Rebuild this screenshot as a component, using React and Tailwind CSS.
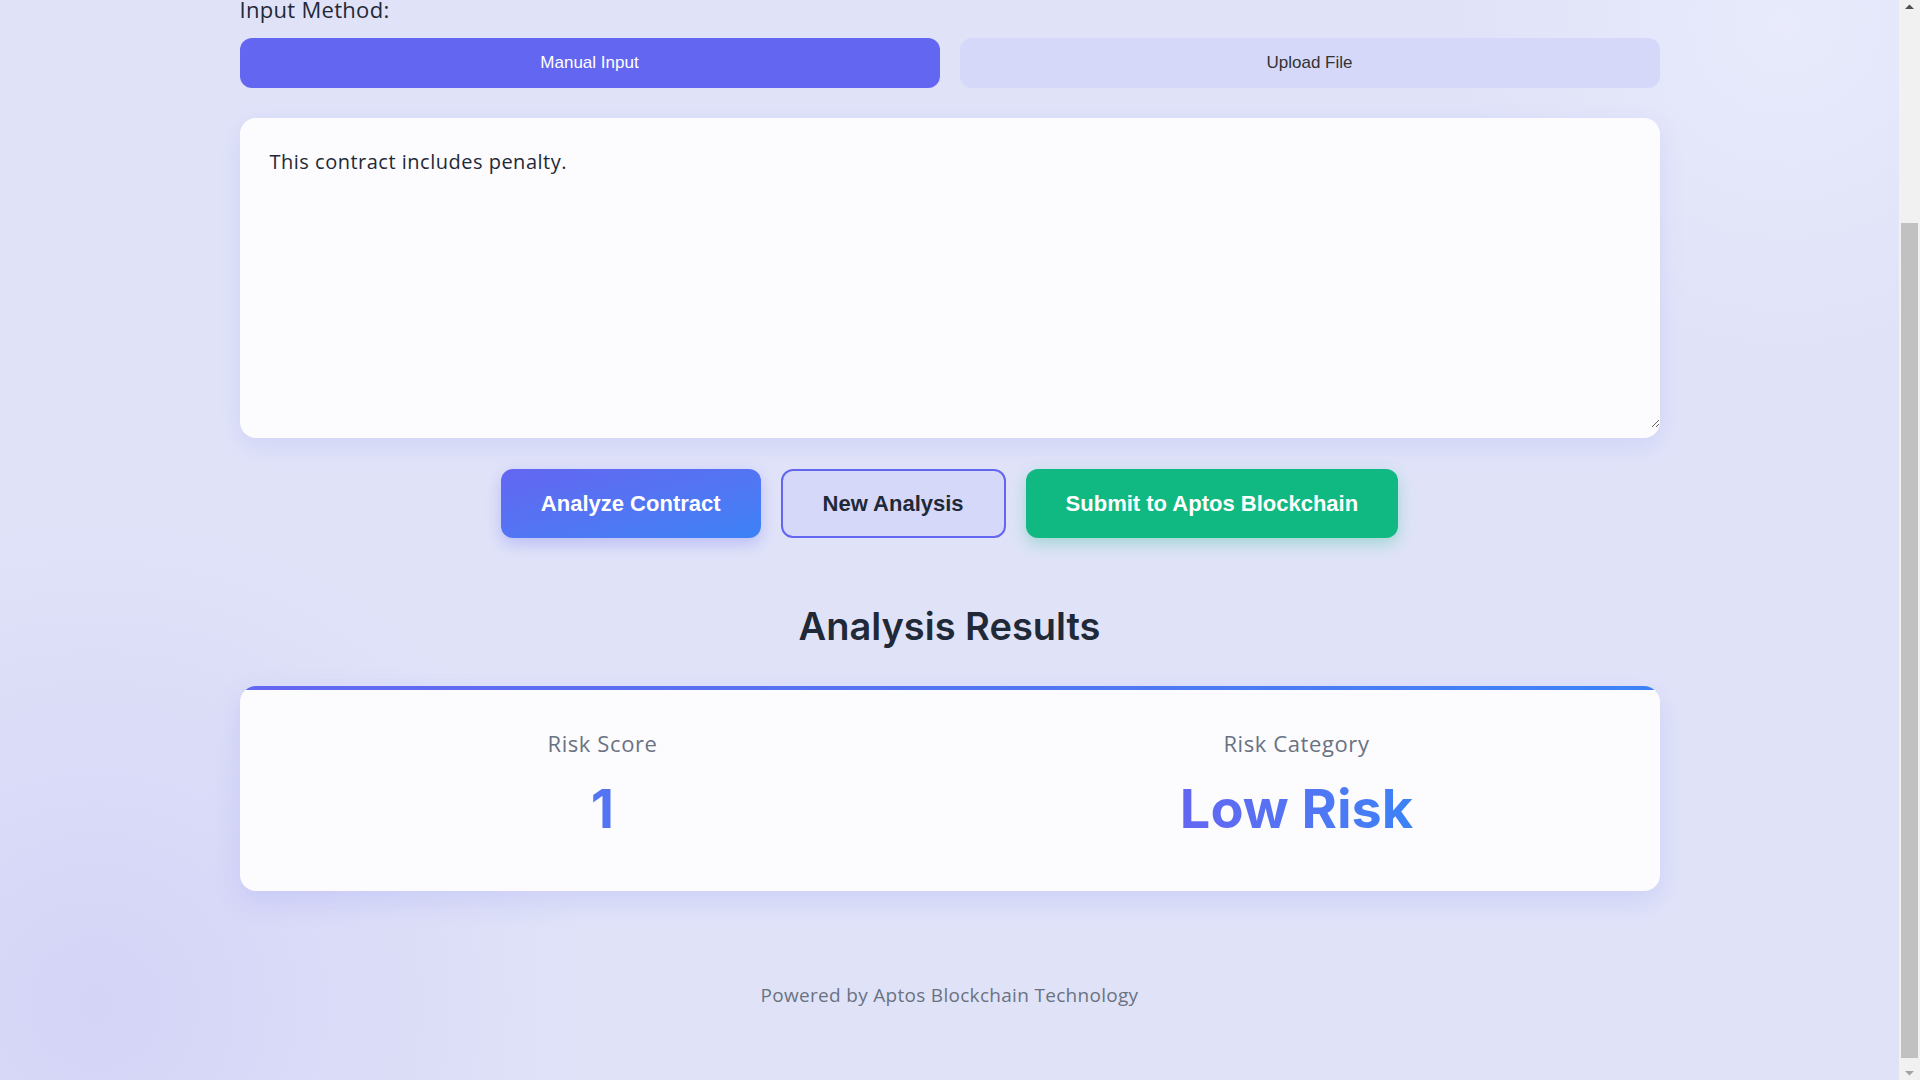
import { useState, useLayoutEffect, useEffect } from "react";

function FakeScrollbar() {
  // the reference was captured with a classic browser scrollbar, scrolled to the bottom
  return (
    <div aria-hidden="true" className="fixed top-0 right-0 z-50 h-screen w-[21px] bg-[#f1f1f1]">
      <svg className="absolute top-[3px] left-[5px]" width="11" height="8" viewBox="0 0 11 8">
        <path d="M1 6 L5.5 1.5 L10 6 Z" fill="#505050" />
      </svg>
      <div className="absolute top-[223px] left-[2px] h-[835px] w-[17px] bg-[#c1c1c1]" />
      <svg className="absolute bottom-[3px] left-[5px]" width="11" height="8" viewBox="0 0 11 8">
        <path d="M1 2 L5.5 6.5 L10 2 Z" fill="#a3a3a3" />
      </svg>
    </div>
  );
}

export default function App() {
  const [mode, setMode] = useState("manual");
  const [text, setText] = useState("This contract includes penalty.");

  useLayoutEffect(() => {
    window.scrollTo(0, document.documentElement.scrollHeight);
  }, []);
  useEffect(() => {
    window.scrollTo(0, document.documentElement.scrollHeight);
  }, []);

  const tab = "h-[50px] rounded-xl font-['Liberation_Sans',Arial,sans-serif] text-[17px]";

  return (
    <div className="min-h-screen bg-[#e0e3f8] bg-fixed bg-[radial-gradient(circle_at_5%_93%,rgba(170,160,245,0.22),transparent_24%),radial-gradient(circle_at_93%_2%,rgba(240,242,255,0.5),transparent_16%)] pr-[21px] font-['Open_Sans','Noto_Sans',sans-serif] text-[#1f2937]">
      <FakeScrollbar />
      <div className="mx-auto w-[1420px] pt-10">
        {/* header (above the fold) */}
        <header className="mb-[95px] text-center">
          <h1 className="font-['Inter',sans-serif] text-5xl font-bold leading-[58px] text-[#4f46e5]">
            Contract Risk Analyzer
          </h1>
          <p className="mt-3 text-xl leading-[30px] text-gray-500">
            AI-powered legal contract analysis secured on the Aptos blockchain
          </p>
          <div className="mt-6 inline-flex items-center gap-2 rounded-full bg-white/70 px-5 py-2 text-sm text-gray-600">
            <span className="h-2 w-2 rounded-full bg-emerald-500" />
            Wallet connected
          </div>
        </header>

        <section>
          <label className="mb-[13px] block text-[22px] font-medium leading-[32px] tracking-[0.3px] text-[#1f2937]">
            Input Method:
          </label>
          <div className="grid grid-cols-2 gap-5">
            <button
              onClick={() => setMode("manual")}
              className={mode === "manual" ? `${tab} bg-[#6366f1] text-white` : `${tab} bg-[#d5d8f9] text-[#333]`}
            >
              Manual Input
            </button>
            <button
              onClick={() => setMode("upload")}
              className={mode === "upload" ? `${tab} bg-[#6366f1] text-white` : `${tab} bg-[#d5d8f9] text-[#333]`}
            >
              Upload File
            </button>
          </div>

          <div className="mt-[30px] rounded-2xl bg-[#fcfcff] pb-[10px] shadow-[0_8px_24px_rgba(99,102,241,0.12)]">
            <textarea
              value={text}
              onChange={e => setText(e.target.value)}
              className="block h-[310px] w-full resize-y rounded-t-2xl bg-transparent p-[30px] text-[20px] leading-[28px] tracking-[0.5px] text-[#1f2937] outline-none"
            />
          </div>

          <div className="mt-[31px] flex justify-center gap-5 font-['Liberation_Sans',Arial,sans-serif] text-[22px] font-bold leading-[25px]">
            <button className="rounded-xl bg-gradient-to-br from-[#6366f1] to-[#3b82f6] px-10 py-[22px] text-white shadow-[0_6px_16px_rgba(99,102,241,0.3)]">
              Analyze Contract
            </button>
            <button className="rounded-xl border-2 border-[#6366f1] bg-[#d6d8f9] px-10 py-5 text-[#1f2937]">
              New Analysis
            </button>
            <button className="rounded-xl bg-[#10b981] px-10 py-[22px] text-white shadow-[0_6px_16px_rgba(16,185,129,0.3)]">
              Submit to Aptos Blockchain
            </button>
          </div>
        </section>

        <section className="mt-[67px]">
          <h2 className="text-center font-['Inter',sans-serif] text-[38px] font-semibold leading-[43px] text-[#1f2937]">
            Analysis Results
          </h2>

          <div className="mt-[38px] overflow-hidden rounded-2xl bg-[#fcfcff] shadow-[0_10px_28px_rgba(99,102,241,0.15)]">
            <div className="h-1 bg-gradient-to-r from-[#6366f1] to-[#3b82f6]" />
            <div className="grid grid-cols-2 gap-8 px-8 pt-[38px] pb-[46px] text-center">
              <div>
                <p className="text-[22px] leading-[30px] tracking-[0.6px] text-gray-500">Risk Score</p>
                <p className="mt-[15px] bg-gradient-to-r from-[#6366f1] to-[#3b82f6] bg-clip-text font-['Inter',sans-serif] text-[54px] font-bold leading-[72px] text-transparent">
                  1
                </p>
              </div>
              <div>
                <p className="text-[22px] leading-[30px] tracking-[0.6px] text-gray-500">Risk Category</p>
                <p className="mt-[15px] inline-block bg-gradient-to-r from-[#6366f1] to-[#3b82f6] bg-clip-text font-['Inter',sans-serif] text-[54px] font-bold leading-[72px] text-transparent">
                  Low Risk
                </p>
              </div>
            </div>
          </div>
        </section>

        <footer className="mt-[91px] pb-[71px] text-center text-[19px] leading-[27px] tracking-[0.3px] text-gray-500">
          Powered by Aptos Blockchain Technology
        </footer>
      </div>
    </div>
  );
}
